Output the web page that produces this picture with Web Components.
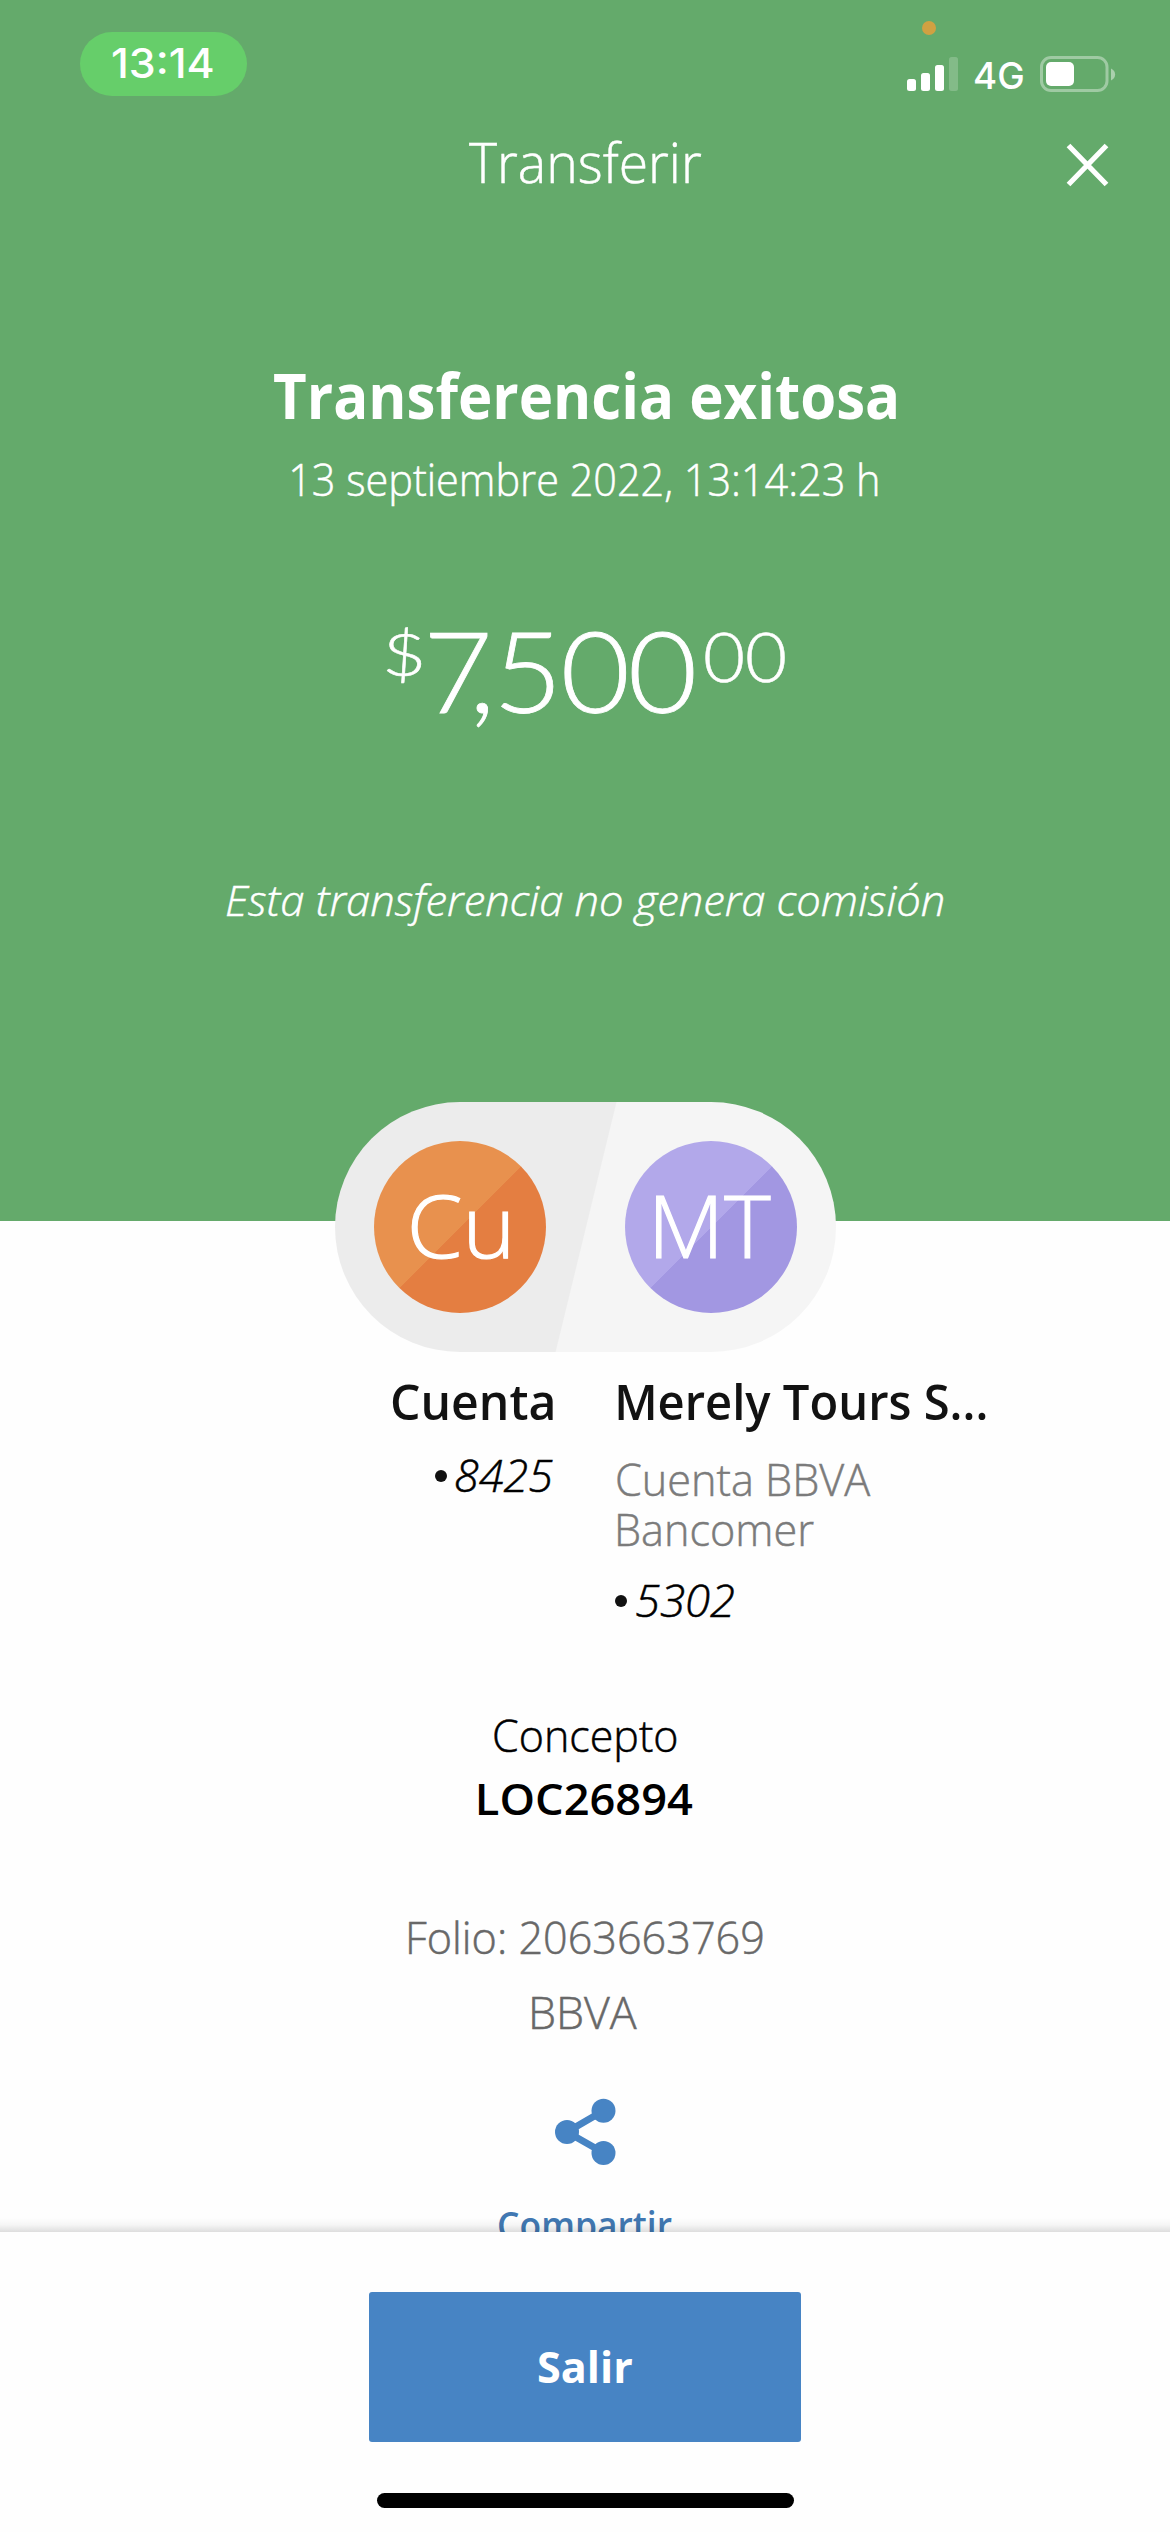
<!DOCTYPE html>
<html lang="es">
<head>
<meta charset="utf-8">
<title>Transferir</title>
<style>
html,body{margin:0;padding:0;background:#fefefe}
body{width:1170px;height:2532px;overflow:hidden;font-family:"Open Sans","Noto Sans",sans-serif}
</style>
</head>
<body>
<transfer-screen></transfer-screen>
<script>
const define=(name,html,Base=HTMLElement)=>{
  const t=document.createElement('template');t.innerHTML=html;
  customElements.define(name,class extends Base{
    constructor(){super();this.attachShadow({mode:'open'}).append(t.content.cloneNode(true));}
  });
};

/* A single line of text whose ink spans exactly `w` pixels at font size `size`. */
class FitText extends HTMLElement{
  connectedCallback(){
    if(this.shadowRoot)return;
    const size=+this.getAttribute('size'),w=+this.getAttribute('w');
    this.attachShadow({mode:'open'}).innerHTML=`<style>
      :host{display:block;flex:none;width:${w}px;height:${size}px;font-size:${size}px;line-height:${size}px;white-space:nowrap}
      span{display:inline-block;transform-origin:0 50%;-webkit-text-stroke:var(--stroke,0) currentColor}</style><span><slot></slot></span>`;
    const cs=getComputedStyle(this),c=document.createElement('canvas').getContext('2d');
    c.font=`${cs.fontStyle} ${cs.fontWeight} ${size}px ${cs.fontFamily}`;
    const m=c.measureText(this.textContent),k=w/(m.actualBoundingBoxLeft+m.actualBoundingBoxRight);
    this.shadowRoot.querySelector('span').style.transform=`translate(${m.actualBoundingBoxLeft*k}px,var(--dy,1.5px)) scaleX(${k})`;
  }
}
customElements.define('fit-text',FitText);

define('status-bar',`<style>
:host{--stroke:0;--dy:0px;display:flex;height:110px;justify-content:space-between;align-items:flex-start;color:#fff;font-family:Inter,"Liberation Sans",sans-serif}
.time{display:flex;justify-content:center;align-items:center;margin:32px 0 0 80px;width:167px;height:64px;border-radius:32px;background:#66ce6a;font-weight:500}
.time fit-text{margin:1px 3px 0 0}
.right{display:grid;grid-template-columns:51px 48px 76px;column-gap:17px;margin:21px 54px 0 0}
.right svg{display:block}
.net{margin-top:36px;font-weight:500}
</style>
<div class="time"><fit-text size="40.5" w="101">13:14</fit-text></div>
<div class="right">
<svg width="51" height="72" viewBox="907 21 51 72"><circle cx="929" cy="28" r="7" fill="#d0a142"/><g fill="#fff"><rect x="907" y="79" width="9" height="12" rx="2.5"/><rect x="921" y="73" width="9" height="18" rx="2.5"/><rect x="935" y="65" width="9" height="26" rx="2.5"/><rect x="949" y="57" width="9" height="34" rx="2.5" opacity=".2"/></g></svg>
<fit-text class="net" size="37" w="48">4G</fit-text>
<svg width="76" height="72" viewBox="1040 21 76 72"><rect x="1041.5" y="57.5" width="65.5" height="33" rx="9.5" fill="none" stroke="#fff" stroke-opacity=".38" stroke-width="3"/><rect x="1046" y="62" width="28" height="24" rx="5" fill="#fff"/><path d="M1111 68.5c5.5 2.5 5.5 9.500 0 12z" fill="#fff" opacity=".45"/></svg>
</div>`);

define('nav-bar',`<style>
:host{--dy:.4px;display:grid;grid-template-columns:1fr auto 1fr;height:120px;color:#fff;font-weight:300}
fit-text{margin-top:23px}
svg{justify-self:end;margin:33px 61px 0 0}
</style><span></span><fit-text size="56" w="232">Transferir</fit-text>
<svg width="43" height="44" viewBox="0 0 43 44"><path d="M2.500 2.500 40.500 41.500M40.500 2.500 2.500 41.500" stroke="#fff" stroke-width="5.2"/></svg>`);

define('money-amount',`<style>
:host{display:flex;align-items:flex-start;font-family:Lato,"Open Sans",sans-serif;font-weight:300;height:112px;width:399px}
.s{margin-top:10px}
.big{flex:none;width:282px;margin-left:2px;font-size:112px;line-height:112px;white-space:nowrap;letter-spacing:-2px;transform:translateY(2px) scaleX(1.07);transform-origin:0 50%;-webkit-text-stroke:.8px currentColor}
.big span{letter-spacing:-22px}
</style><fit-text class="s" size="59" w="35">$</fit-text><div class="big"><span>7</span>,500</div><fit-text class="s" style="margin-top:7px" size="69" w="80">00</fit-text>`);

define('result-hero',`<style>
:host{--stroke:.5px;display:flex;flex-direction:column;align-items:center;height:1221px;background:#64aa6b;color:#fff;font-weight:300}
status-bar,nav-bar{align-self:stretch;flex:none}
.t{--stroke:0;font-weight:700;margin-top:132px}.d{margin-top:32.4px}
money-amount{margin-top:112.600px}.i{font-style:italic;margin-top:151.3px}
</style><status-bar></status-bar><nav-bar></nav-bar>
<fit-text class="t" size="62" w="622">Transferencia exitosa</fit-text>
<fit-text class="d" size="43.5" w="586">13 septiembre 2022, 13:14:23 h</fit-text>
<money-amount></money-amount>
<fit-text class="i" size="43" w="716">Esta transferencia no genera comisión</fit-text>`);

define('initials-avatar',`<style>
:host{display:flex;align-items:center;justify-content:center;width:172px;height:172px;border-radius:50%;color:#fff;font-weight:300;background:linear-gradient(135deg,var(--a) 50%,var(--b) 50.300%)}
</style><slot></slot>`);

define('account-pill',`<style>
:host{--stroke:1.2px;display:flex;box-sizing:border-box;align-items:center;justify-content:space-between;width:501px;height:250px;padding:0 39px;border-radius:125px;background:linear-gradient(103.7deg,#ececec 50%,#f5f5f5 50.200%)}
.o{--a:#e8914e;--b:#e47e41}.p{--a:#b2a8ea;--b:#a297e2}
fit-text{margin-top:-10px}
</style><initials-avatar class="o"><fit-text size="87" w="96">Cu</fit-text></initials-avatar>
<initials-avatar class="p"><fit-text size="87" w="115" style="margin-left:5px">MT</fit-text></initials-avatar>`);

define('masked-number',`<style>
:host{display:flex;align-items:center;height:43.5px;gap:9px;color:#000;font-style:italic;font-weight:300}
i{width:12px;height:12px;border-radius:50%;background:#111;margin-top:3px}
</style><i></i><slot></slot>`);

define('account-pair',`<style>
:host{--dy:.8px;display:grid;grid-template-columns:553px 1fr;column-gap:64px;height:245px;color:#121212}
div{display:flex;flex-direction:column;align-items:flex-start}
.l{align-items:flex-end}
.n{font-weight:600;--stroke:0;--dy:.3px}.k{color:#7b7b7b;font-weight:300}
</style>
<div class="l"><fit-text class="n" size="49" w="161">Cuenta</fit-text><masked-number style="margin-top:27px"><fit-text size="43.5" w="97">8425</fit-text></masked-number></div>
<div><fit-text class="n" size="49" w="368" style="margin-left:1px">Merely Tours S...</fit-text>
<fit-text class="k" size="43.5" w="254" style="margin-top:31px">Cuenta BBVA</fit-text>
<fit-text class="k" size="43.5" w="196" style="margin:6.5px 0 0 1px">Bancomer</fit-text>
<masked-number style="margin:27.5px 0 0 -2px"><fit-text size="43.5" w="98">5302</fit-text></masked-number></div>`);

define('share-action',`<style>
:host{--stroke:0;display:flex;flex-direction:column;align-items:center;color:#4178b2;font-weight:600}
svg{display:block}fit-text{margin-top:38.500px}
</style><svg width="62" height="68" viewBox="554 2098 62 68"><path d="M603.500 2110.800 567 2132l36.500 20.800" fill="none" stroke="#4784c4" stroke-width="7"/><g fill="#4784c4"><circle cx="603.500" cy="2110.800" r="12"/><circle cx="567" cy="2132" r="12"/><circle cx="603.500" cy="2153" r="12"/></g></svg>
<fit-text size="37" w="173">Compartir</fit-text>`);

define('result-details',`<style>
:host{--stroke:.5px;display:flex;flex-direction:column;align-items:center;height:1011px;overflow:visible}
account-pill{margin-top:-119px;flex:none}
account-pair{align-self:stretch;margin-top:24.500px;flex:none}
.c{font-weight:300;margin-top:90.900px;color:#000}.l{--stroke:0;font-weight:600;margin:19.500px 0 0 2px;color:#000}
.f,.b{color:#686868;font-weight:300}.f{margin:95.500px 0 0 1px}.b{margin-top:31.500px}
share-action{margin-top:65px}
</style><account-pill></account-pill><account-pair></account-pair>
<fit-text class="c" size="43.5" w="182">Concepto</fit-text>
<fit-text class="l" size="43.5" w="214">LOC26894</fit-text>
<fit-text class="f" size="43.5" w="354">Folio: 2063663769</fit-text>
<fit-text class="b" size="43.5" w="105.500">BBVA</fit-text>
<share-action></share-action>`);

define('action-footer',`<style>
:host{display:flex;flex-direction:column;align-items:center;height:300px;background:#fefefe;position:relative}
:host::before{content:"";position:absolute;left:0;right:0;top:-14px;height:14px;background:linear-gradient(rgba(0,0,0,0),rgba(0,0,0,.035) 50%,rgba(0,0,0,.13))}
button{all:unset;display:flex;align-items:center;justify-content:center;width:432px;height:150px;margin-top:60px;border-radius:3px;background:#4784c4;color:#fff;font-weight:700}
fit-text{margin-top:-5px}
.home{width:417px;height:15px;border-radius:8px;background:#000;margin-top:51px}
</style><button><fit-text size="43.5" w="93">Salir</fit-text></button><div class="home"></div>`);

define('transfer-screen',`<style>:host{display:flex;flex-direction:column;width:1170px;height:2532px;overflow:hidden}
result-hero,result-details,action-footer{flex:none}</style>
<result-hero></result-hero><result-details></result-details><action-footer></action-footer>`);
</script>
</body>
</html>
